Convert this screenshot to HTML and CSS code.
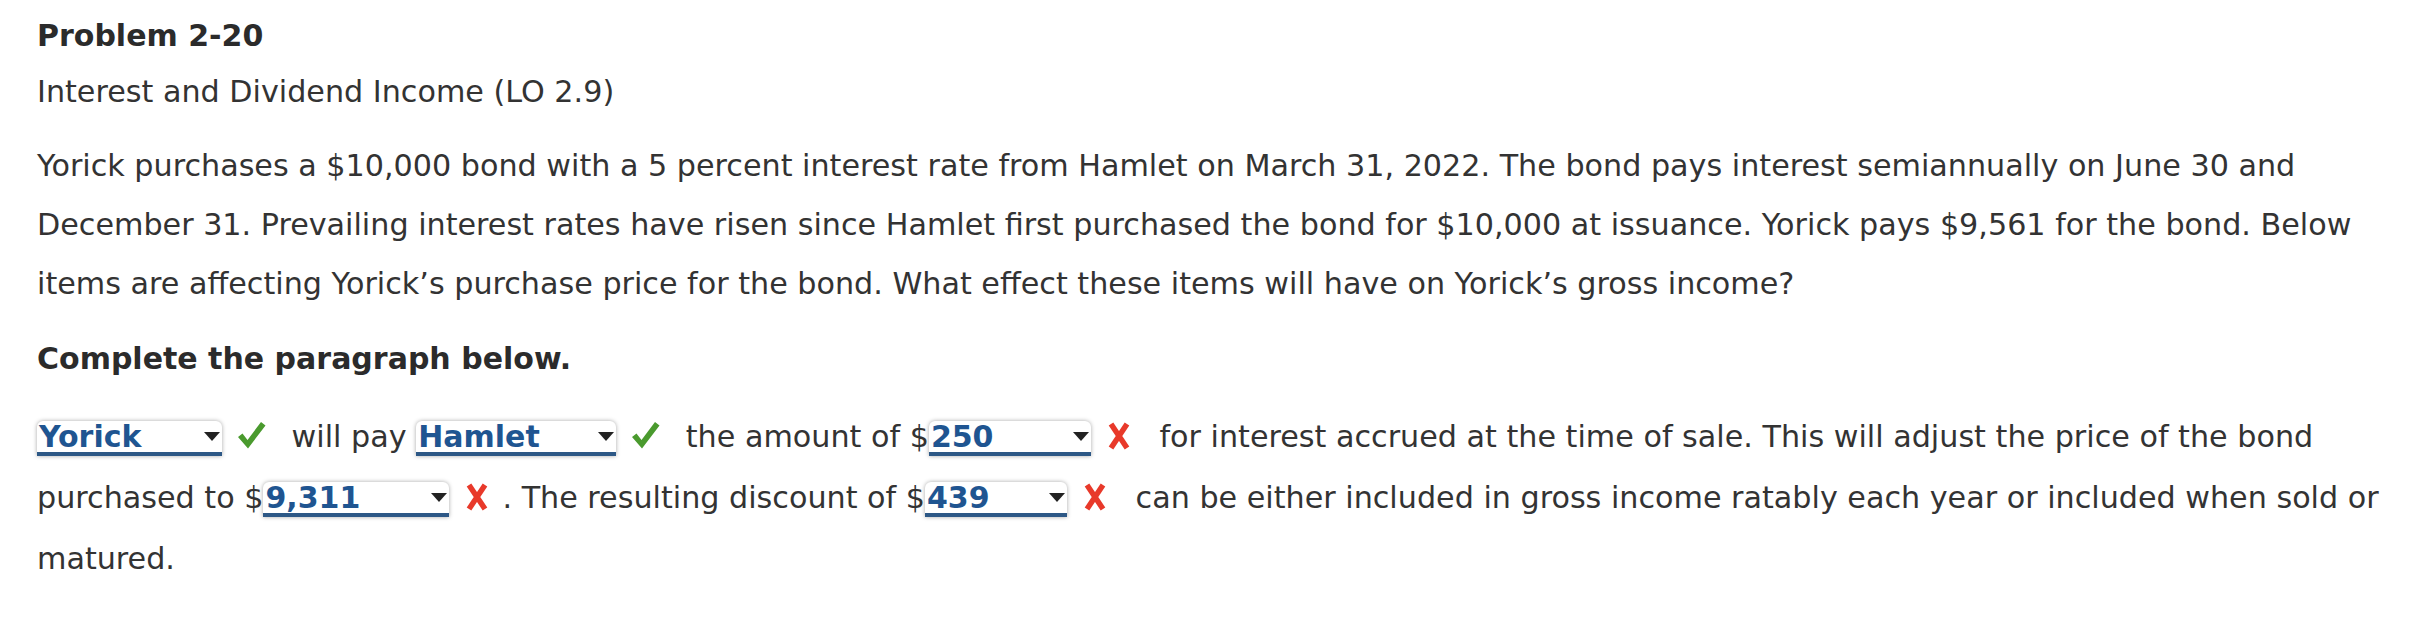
FILE: index.html
```html
<!DOCTYPE html>
<html lang="en">
<head>
<meta charset="utf-8">
<title>Problem 2-20</title>
<link rel="stylesheet" href="styles.css">
</head>
<body>
<main class="page">
  <h1 class="title">Problem 2-20</h1>
  <p class="subtitle">Interest and Dividend Income (LO 2.9)</p>
  <p class="intro">Yorick purchases a $10,000 bond with a 5 percent interest rate from Hamlet on March 31, 2022. The bond pays interest semiannually on June 30 and December 31. Prevailing interest rates have risen since Hamlet first purchased the bond for $10,000 at issuance. Yorick pays $9,561 for the bond. Below items are affecting Yorick’s purchase price for the bond. What effect these items will have on Yorick’s gross income?</p>
  <p class="instr">Complete the paragraph below.</p>
  <p class="answer"><span class="dd dd-yorick"><span class="dd-val">Yorick</span><span class="dd-arrow"></span></span><span class="mark mark-ok"><svg viewBox="0 0 30 30" width="30" height="30"><polygon points="2,17 6.5,13.5 11.5,20 25,2 29.5,5.5 12,28.5" fill="#4a9a2e"/></svg></span> will pay <span class="dd dd-hamlet"><span class="dd-val">Hamlet</span><span class="dd-arrow"></span></span><span class="mark mark-ok"><svg viewBox="0 0 30 30" width="30" height="30"><polygon points="2,17 6.5,13.5 11.5,20 25,2 29.5,5.5 12,28.5" fill="#4a9a2e"/></svg></span> the amount of $<span class="dd dd-250"><span class="dd-val">250</span><span class="dd-arrow"></span></span><span class="mark mark-bad"><svg viewBox="0 0 22 28" width="22" height="28"><path d="M3 2 L19 26 M19 2 L3 26" stroke="#e8392a" stroke-width="5.5" stroke-linecap="butt" fill="none"/></svg></span> for interest accrued at the time of sale. This will adjust the price of the bond purchased to $<span class="dd dd-9311"><span class="dd-val">9,311</span><span class="dd-arrow"></span></span><span class="mark mark-bad mark-tight"><svg viewBox="0 0 22 28" width="22" height="28"><path d="M3 2 L19 26 M19 2 L3 26" stroke="#e8392a" stroke-width="5.5" stroke-linecap="butt" fill="none"/></svg></span>. The resulting discount of $<span class="dd dd-439"><span class="dd-val">439</span><span class="dd-arrow"></span></span><span class="mark mark-bad"><svg viewBox="0 0 22 28" width="22" height="28"><path d="M3 2 L19 26 M19 2 L3 26" stroke="#e8392a" stroke-width="5.5" stroke-linecap="butt" fill="none"/></svg></span> can be either included in gross income ratably each year or included when sold or matured.</p>
</main>
</body>
</html>
```

FILE: styles.css
```css
html, body {
  margin: 0;
  padding: 0;
  background: #ffffff;
}

.page {
  padding: 16px 20px 0 37px;
  font-family: "DejaVu Sans", Verdana, sans-serif;
  font-size: 30.2px;
  color: #333333;
}

.title {
  margin: 0;
  font-size: 30px;
  line-height: 40px;
  font-weight: bold;
  color: #2b2b2b;
}

.subtitle {
  margin: 16px 0 0;
  line-height: 40px;
}

.intro {
  margin: 24px 0 0;
  line-height: 59px;
}

.instr {
  margin: 26px 0 0;
  font-size: 30px;
  line-height: 40px;
  font-weight: bold;
  color: #2b2b2b;
}

.answer {
  margin: 27px 0 0;
  line-height: 61px;
}

.dd {
  display: inline-flex;
  justify-content: space-between;
  align-items: flex-start;
  box-sizing: border-box;
  height: 35px;
  padding: 0 2px 0 2px;
  background: #ffffff;
  border-bottom: 4px solid #2d5886;
  border-radius: 6px 6px 0 0;
  box-shadow: 0 0 4px rgba(0, 0, 0, 0.35);
  vertical-align: baseline;
  line-height: 31px;
}

.dd-val {
  font-size: 30px;
  font-weight: bold;
  color: #1f5591;
  line-height: 32px;
}

.dd-arrow {
  width: 0;
  height: 0;
  margin-top: 11px;
  border-left: 8px solid transparent;
  border-right: 8px solid transparent;
  border-top: 9px solid #222222;
}

.dd-yorick { width: 185px; }
.dd-hamlet { width: 200px; }
.dd-250 { width: 162px; }
.dd-9311 { width: 186px; }
.dd-439 { width: 142px; }

.mark {
  display: inline-block;
  vertical-align: -3px;
  line-height: 0;
}

.mark svg {
  display: block;
}

.mark-ok {
  margin: 0 16px 0 14px;
}

.mark-bad {
  margin: 0 20px 0 17px;
}

.mark-bad.mark-tight {
  margin-right: 14px;
}
```
